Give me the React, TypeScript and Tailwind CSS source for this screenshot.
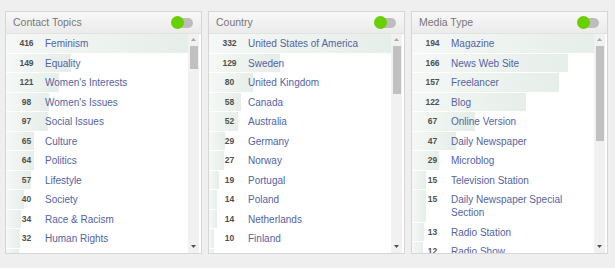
import React from 'react';

type Item = { count: number; label: string };

const panels: { title: string; thumb: [number, number]; items: Item[] }[] = [
  {
    title: 'Contact Topics',
    thumb: [12, 23],
    items: [
      { count: 416, label: 'Feminism' },
      { count: 149, label: 'Equality' },
      { count: 121, label: "Women's Interests" },
      { count: 98, label: "Women's Issues" },
      { count: 97, label: 'Social Issues' },
      { count: 65, label: 'Culture' },
      { count: 64, label: 'Politics' },
      { count: 57, label: 'Lifestyle' },
      { count: 40, label: 'Society' },
      { count: 34, label: 'Race & Racism' },
      { count: 32, label: 'Human Rights' },
      { count: 30, label: 'Sexuality' },
    ],
  },
  {
    title: 'Country',
    thumb: [12, 48],
    items: [
      { count: 332, label: 'United States of America' },
      { count: 129, label: 'Sweden' },
      { count: 80, label: 'United Kingdom' },
      { count: 58, label: 'Canada' },
      { count: 52, label: 'Australia' },
      { count: 29, label: 'Germany' },
      { count: 27, label: 'Norway' },
      { count: 19, label: 'Portugal' },
      { count: 14, label: 'Poland' },
      { count: 14, label: 'Netherlands' },
      { count: 10, label: 'Finland' },
      { count: 9, label: 'New Zealand' },
    ],
  },
  {
    title: 'Media Type',
    thumb: [12, 95],
    items: [
      { count: 194, label: 'Magazine' },
      { count: 166, label: 'News Web Site' },
      { count: 157, label: 'Freelancer' },
      { count: 122, label: 'Blog' },
      { count: 67, label: 'Online Version' },
      { count: 47, label: 'Daily Newspaper' },
      { count: 29, label: 'Microblog' },
      { count: 15, label: 'Television Station' },
      { count: 15, label: 'Daily Newspaper Special Section' },
      { count: 13, label: 'Radio Station' },
      { count: 12, label: 'Radio Show' },
    ],
  },
];

function Toggle() {
  return (
    <div className="relative w-[22px] h-[13px] flex items-center">
      <div className="ml-[3px] w-[19px] h-[10px] rounded-full bg-[#bdbdbd]" />
      <div className="absolute left-0 top-0 w-[13px] h-[13px] rounded-full bg-[#68d000]" />
    </div>
  );
}

function Scrollbar({ thumb }: { thumb: [number, number] }) {
  return (
    <div className="w-[11px] bg-[#f1f1f1] flex flex-col items-center">
      <svg width="7" height="11" viewBox="0 0 7 11" className="shrink-0">
        <path d="M1 7 L3.5 4 L6 7 Z" fill="#a8a8a8" />
      </svg>
      <div
        className="w-[8px] bg-[#c1c1c1]"
        style={{ marginTop: thumb[0] - 11, height: thumb[1] }}
      />
      <div className="flex-1" />
      <svg width="7" height="11" viewBox="0 0 7 11" className="shrink-0">
        <path d="M1 3 L6 3 L3.5 6 Z" fill="#505050" />
      </svg>
    </div>
  );
}

function Panel({ title, thumb, items }: (typeof panels)[number]) {
  const max = Math.max(...items.map((i) => i.count));
  return (
    <div className="w-[197px] h-[243px] border border-[#d6d6d6] bg-white flex flex-col">
      <div className="h-[22px] shrink-0 border-b border-[#e2e2e2] bg-gradient-to-b from-[#f8f8f8] to-[#ebebeb] flex items-center justify-between pl-[7px] pr-[8px]">
        <span className="text-[10.5px] text-[#777]">{title}</span>
        <Toggle />
      </div>
      <div className="flex-1 min-h-0 flex">
        <div className="flex-1 overflow-hidden">
          {items.map((it, idx) => (
            <div key={idx} className="relative flex items-start py-[3.25px] leading-[13px]">
              <div
                className="absolute left-0 top-0 bottom-[1px] bg-gradient-to-r from-[#f5f8f6] to-[#e6eee9]"
                style={{ width: `${(it.count / max) * 100}%` }}
              />
              <span className="relative w-[31px] ml-[5px] shrink-0 text-center text-[8.5px] font-bold text-[#505050]">
                {it.count}
              </span>
              <span className="relative ml-[3px] pr-[6px] text-[10px] text-[#5463a4]">{it.label}</span>
            </div>
          ))}
        </div>
        <Scrollbar thumb={thumb} />
        <div className="w-[2px]" />
      </div>
    </div>
  );
}

export default function App() {
  return (
    <div
      className="w-[615px] h-[268px] bg-[#efefef] pt-[11px] pl-[5px] flex gap-[6px] items-start"
      style={{ fontFamily: '"Liberation Sans", Arial, sans-serif' }}
    >
      {panels.map((p) => (
        <Panel key={p.title} {...p} />
      ))}
    </div>
  );
}
